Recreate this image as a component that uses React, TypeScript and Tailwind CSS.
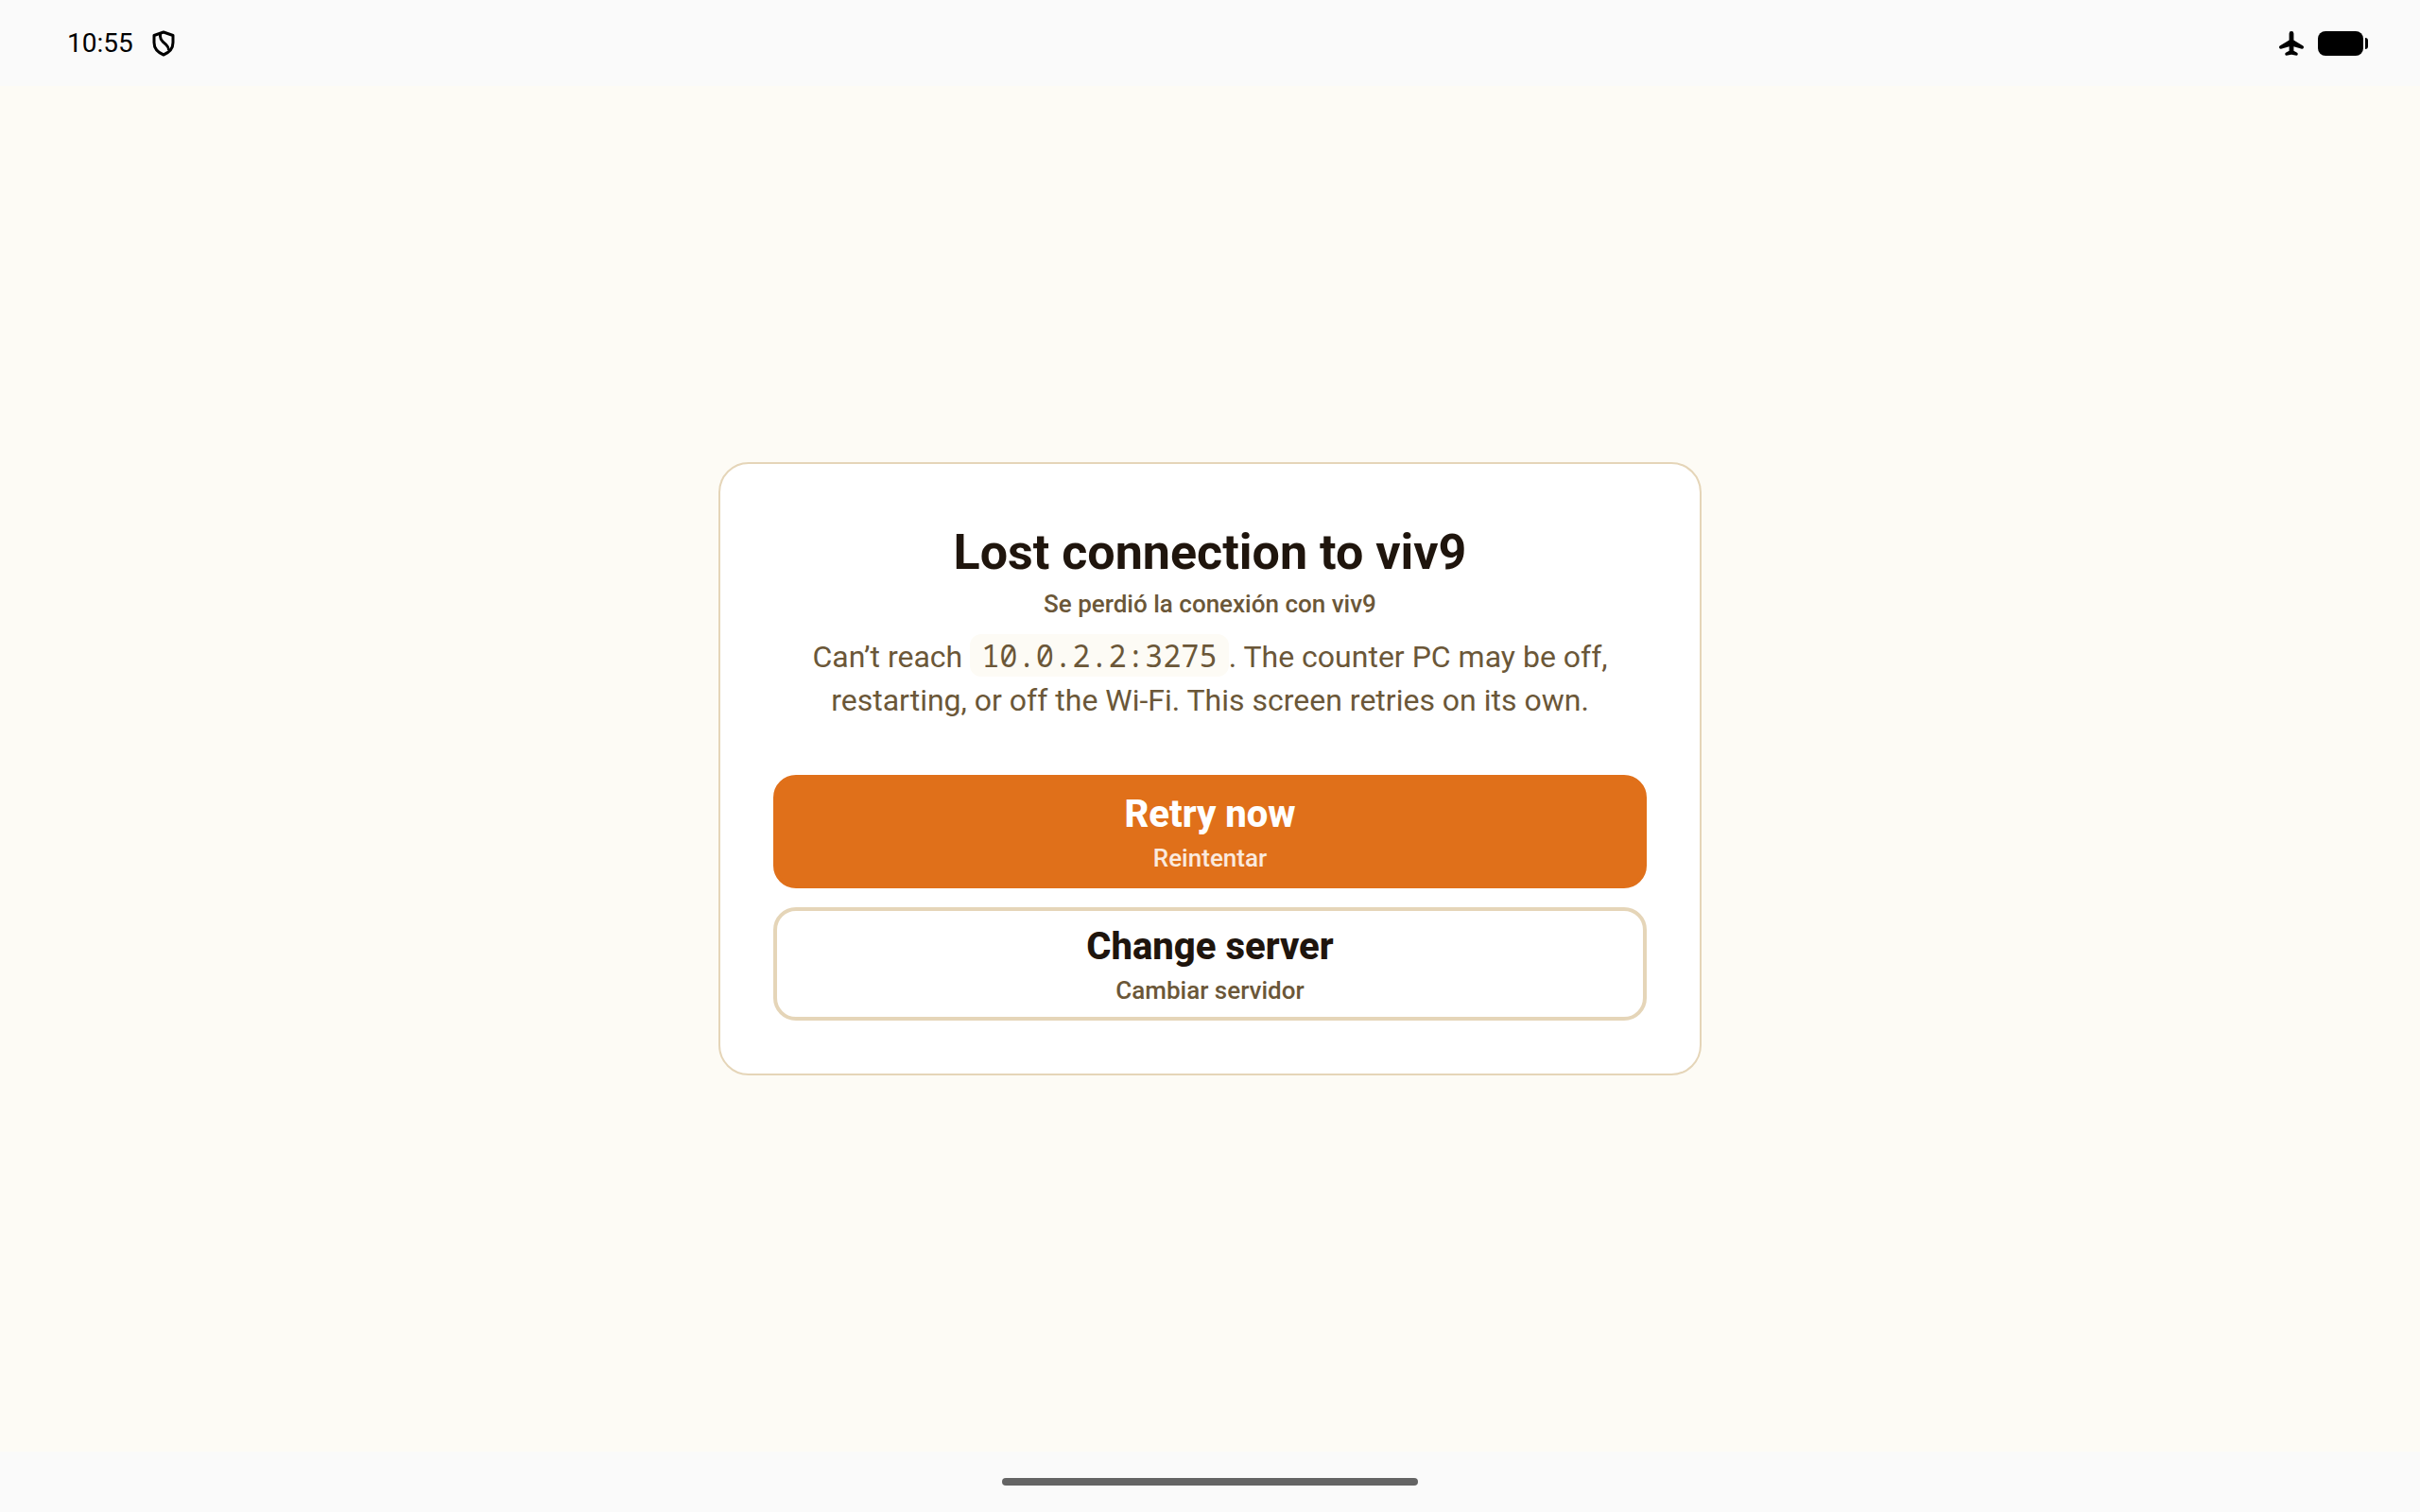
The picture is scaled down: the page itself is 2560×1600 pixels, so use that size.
import type { ReactNode } from 'react'

const SERVER = '10.0.2.2:3275'

function ShieldIcon() {
  return (
    <svg className="h-7 w-6" viewBox="0 0 24 28" fill="none" stroke="currentColor" aria-hidden="true">
      <path
        strokeWidth={3}
        strokeLinejoin="round"
        d="M12 2 22 5.500V13c0 6-4 10.500-10 13C6 23.500 2 19 2 13V5.500Z"
      />
      <path strokeWidth={3} d="M8.500 3.500v3c0 2.500 1 4 3 6l3 2.500c2 2 3 3.500 3 6" />
    </svg>
  )
}

function AirplaneIcon() {
  return (
    <svg className="h-7 w-7" viewBox="0 0 28 28" fill="currentColor" aria-hidden="true">
      <path d="M14 1a2.400 2.400 0 0 1 2.400 2.400V10.500L26.300 16.400A1.900 1.900 0 0 1 25 19.800L16.400 17.200V21.700L20 23.700A1.700 1.700 0 0 1 19.300 26.800L14 25.700 8.700 26.800A1.700 1.700 0 0 1 8 23.700L11.600 21.700V17.200L3 19.800A1.900 1.900 0 0 1 1.700 16.400L11.600 10.500V3.400A2.400 2.400 0 0 1 14 1Z" />
    </svg>
  )
}

function BatteryIcon() {
  return (
    <svg className="h-[26px] w-[53px]" viewBox="0 0 53 26" fill="currentColor" aria-hidden="true">
      <rect width="48" height="26" rx="8" />
      <path d="M50 7a3 3 0 0 1 3 3v6a3 3 0 0 1-3 3Z" />
    </svg>
  )
}

function StatusBar() {
  return (
    <header className="flex h-[91px] shrink-0 items-center justify-between bg-[#fafafa] pr-[55px] pl-[71px] text-black">
      <div className="flex items-center gap-5">
        <time className="text-[28px] leading-8">10:55</time>
        <ShieldIcon />
      </div>
      <div className="flex items-center gap-[14px]">
        <AirplaneIcon />
        <BatteryIcon />
      </div>
    </header>
  )
}

type ActionButtonProps = {
  label: ReactNode
  sublabel: ReactNode
  variant: 'primary' | 'outline'
}

function ActionButton({ label, sublabel, variant }: ActionButtonProps) {
  const isPrimary = variant === 'primary'

  return (
    <button
      type="button"
      className={`flex min-h-[120px] w-full cursor-pointer flex-col items-center justify-center rounded-3xl border-4 ${
        isPrimary ? 'border-[#e0701a] bg-[#e0701a] text-white' : 'border-[#e5d5b8] bg-white text-[#1f150d]'
      }`}
    >
      <span className="text-[40px] leading-[52px] font-extrabold">{label}</span>
      <span
        className={`mt-1 text-[26px] leading-8 font-medium ${isPrimary ? 'text-white/85' : 'text-[#6b5738]'}`}
      >
        {sublabel}
      </span>
    </button>
  )
}

export default function App() {
  return (
    <div className="flex min-h-screen flex-col bg-[#fdfbf5] font-['Roboto',sans-serif]">
      <StatusBar />

      <main className="flex flex-1 items-center justify-center">
        <section className="w-full max-w-[1040px] rounded-[32px] border-2 border-[#e5d5b8] bg-white p-14 text-center">
          <h1 className="text-[52px] leading-[75px] font-bold text-[#1f150d]">Lost connection to viv9</h1>
          <p lang="es" className="text-[26px] leading-[34px] font-medium text-[#6b5738]">
            Se perdió la conexión con viv9
          </p>
          <p className="mt-4 text-[32px] leading-[46px] text-[#6b5738]">
            Can’t reach{' '}
            <code className="rounded-xl bg-[#fdfbf5] px-3 py-px font-['Droid_Sans_Mono','Noto_Sans_Mono','DejaVu_Sans_Mono',monospace] leading-none">
              {SERVER}
            </code>
            . The counter PC may be off, restarting, or off the Wi-Fi. This screen retries on its own.
          </p>

          <div className="mt-14 flex flex-col gap-5">
            <ActionButton variant="primary" label="Retry now" sublabel={<span lang="es">Reintentar</span>} />
            <ActionButton variant="outline" label="Change server" sublabel={<span lang="es">Cambiar servidor</span>} />
          </div>
        </section>
      </main>

      {/* Gesture navigation handle */}
      <footer className="flex h-16 shrink-0 items-center justify-center bg-[#fafafa]">
        <div className="h-2 w-[440px] rounded-full bg-[#646464]" />
      </footer>
    </div>
  )
}
